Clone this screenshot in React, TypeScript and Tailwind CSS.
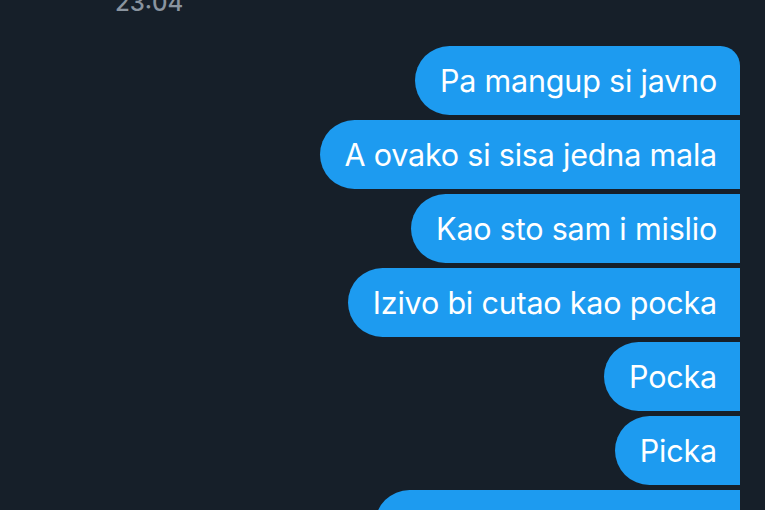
import React from "react";

const msgs = [
  "Pa mangup si javno",
  "A ovako si sisa jedna mala",
  "Kao sto sam i mislio",
  "Izivo bi cutao kao pocka",
  "Pocka",
  "Picka",
];

export default function App() {
  return (
    <div
      className="h-[510px] w-[765px] overflow-hidden bg-[#161f29] text-white"
      style={{ fontFamily: "Inter, 'Liberation Sans', sans-serif" }}
    >
      <div className="-mt-[8px] h-[21px] pl-[115px] text-[24px] leading-[21px] font-medium text-[#8a949f]">
        23:04
      </div>
      <div className="mt-[33px] flex flex-col items-end gap-[5px] pr-[25px]">
        {msgs.map((m, i) => (
          <div
            key={i}
            className={
              "flex h-[69px] items-center rounded-l-[35px] bg-[#1d9bf0] pl-[25px] pr-[23px] text-[30.5px] tracking-[-0.2px] " +
              (i === 0 ? "rounded-tr-[20px]" : "")
            }
          >
            {m}
          </div>
        ))}
        <div className="h-[69px] w-[365px] rounded-l-[35px] bg-[#1d9bf0]" />
      </div>
    </div>
  );
}
